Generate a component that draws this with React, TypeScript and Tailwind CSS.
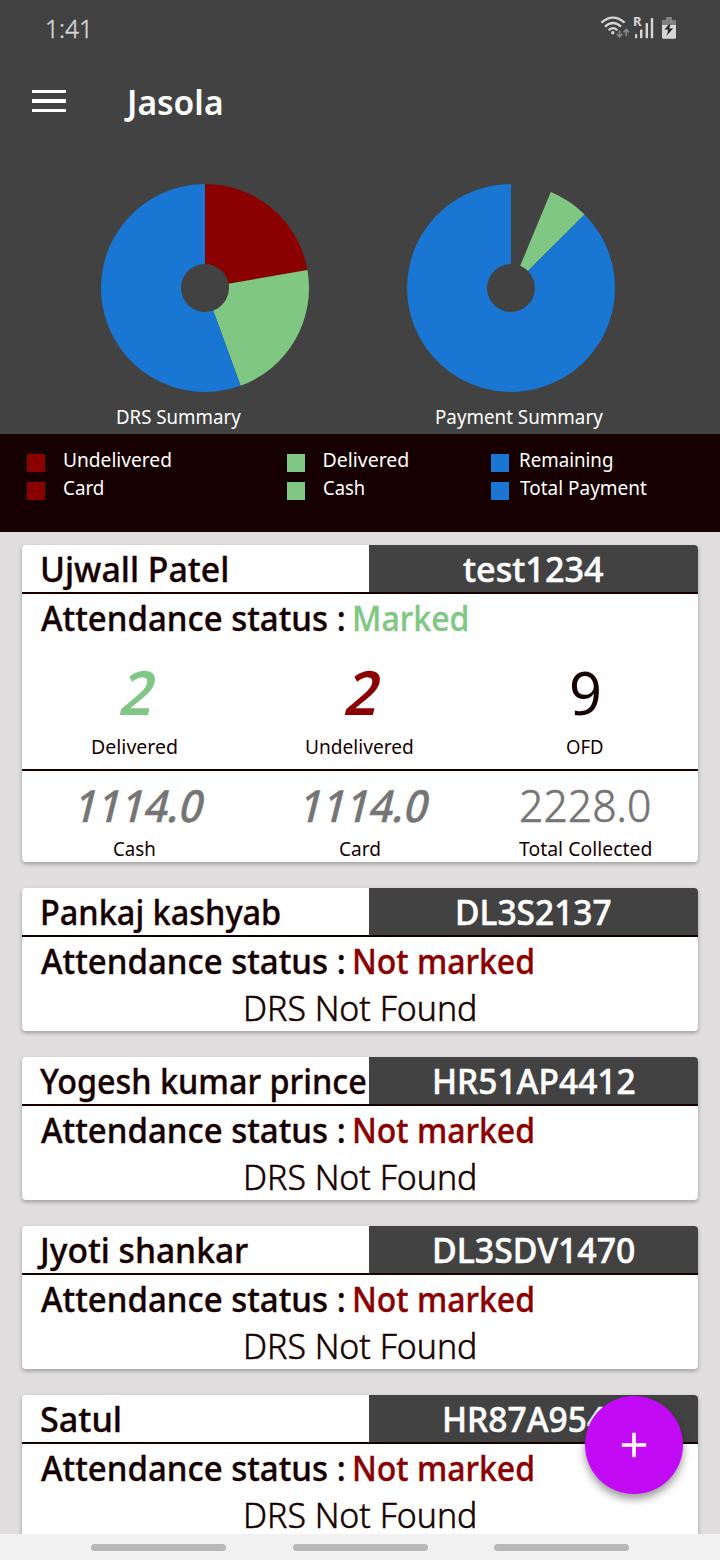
import { useLayoutEffect, useRef, useState } from "react";
import type { ReactNode } from "react";

/* Text condensed or widened horizontally so that it takes exactly `w` pixels. */
function Fit({ w, children }: { w: number; children: ReactNode }) {
  const ref = useRef<HTMLSpanElement>(null);
  const [scale, setScale] = useState(1);
  useLayoutEffect(() => {
    if (ref.current) setScale(w / ref.current.offsetWidth);
  }, [w]);
  return (
    <span className="inline-block shrink-0 whitespace-nowrap" style={{ width: w }}>
      <span ref={ref} className="inline-block origin-left" style={{ transform: `scaleX(${scale})` }}>
        {children}
      </span>
    </span>
  );
}

type Slice = { from: number; to: number; color: string };

function slicePath(from: number, to: number) {
  const pt = (deg: number, r: number) => {
    const a = (deg * Math.PI) / 180;
    return `${(104 + r * Math.sin(a)).toFixed(3)} ${(104 - r * Math.cos(a)).toFixed(3)}`;
  };
  const large = to - from > 180 ? 1 : 0;
  return `M${pt(from, 104)}A104 104 0 ${large} 1 ${pt(to, 104)}L${pt(to, 24)}A24 24 0 ${large} 0 ${pt(from, 24)}Z`;
}

function Donut({ slices }: { slices: Slice[] }) {
  return (
    <svg width="208" height="208" viewBox="0 0 208 208" className="block">
      {slices.map((s) => (
        <path key={s.from} d={slicePath(s.from, s.to)} fill={s.color} />
      ))}
    </svg>
  );
}

function StatusIcons() {
  return (
    <svg width="80" height="36" viewBox="600 10 80 36" className="block">
      <g fill="none" stroke="#d6d6d6" strokeWidth="2.2">
        <path d="M601.4 22.6Q613 12.6 624.6 22.6" />
        <path d="M605 26.6Q613 19.4 621 26.6" />
        <path d="M608.6 30.2Q613 26.2 617.4 30.2" />
      </g>
      <circle cx="612.8" cy="32.7" r="1.7" fill="#d6d6d6" />
      <g fill="none" stroke="#868686" strokeWidth="1.7">
        <path d="M619.6 30.5V37M616.9 34l2.7 2.9 2.7-2.9" />
        <path d="M626.3 36V29.6M623.6 32.4l2.7-2.9 2.7 2.9" />
      </g>
      <text x="633" y="26" fontSize="13" fontWeight="700" fill="#d6d6d6">R</text>
      <g fill="#d6d6d6">
        <rect x="635" y="34" width="2.2" height="4.2" rx=".8" />
        <rect x="640" y="29.4" width="2.4" height="8.8" rx=".8" />
        <rect x="645.6" y="23" width="2.4" height="15.2" rx=".8" />
        <rect x="650.8" y="18" width="2.4" height="20.2" rx=".8" />
      </g>
      <path d="M666 17h6v3h4v5h-14v-5h4z" fill="#808080" />
      <path d="M662 25h14v12.4q0 1.4-1.4 1.4h-11.2q-1.4 0-1.4-1.4z" fill="#d6d6d6" />
      <path d="M671.2 21.6l-7 8.2h3.8l-1.6 6.4 7-8h-3.9z" fill="#222" stroke="#d6d6d6" strokeWidth=".4" />
    </svg>
  );
}

function LegendItem({ color, label, w, gap }: { color: string; label: string; w: number; gap: string }) {
  return (
    <div className="flex h-7 items-center">
      <span className={`mt-[5px] size-[18px] ${color} ${gap}`} />
      <Fit w={w}>{label}</Fit>
    </div>
  );
}

type Person = { name: string; nameW: number; code: string; codeW: number; marked?: boolean };

const people: Person[] = [
  { name: "Ujwall Patel", nameW: 189.5, code: "test1234", codeW: 140.5, marked: true },
  { name: "Pankaj kashyab", nameW: 241, code: "DL3S2137", codeW: 157 },
  { name: "Yogesh kumar prince", nameW: 327, code: "HR51AP4412", codeW: 204 },
  { name: "Jyoti shankar", nameW: 208, code: "DL3SDV1470", codeW: 203 },
  { name: "Satul", nameW: 82, code: "HR87A9547", codeW: 183 },
];

function Stat({ value, valueW, label, labelW, size, style, h, lh }: {
  value: string; valueW: number; label: string; labelW: number; size: string; style: string; h: string; lh: string;
}) {
  return (
    <div className="flex flex-1 flex-col items-center">
      <div className={`${size} ${style} ${h}`}>
        <Fit w={valueW}>{value}</Fit>
      </div>
      <div className={`text-[20px] text-[#170000] ${lh}`}>
        <Fit w={labelW}>{label}</Fit>
      </div>
    </div>
  );
}

function Card({ p }: { p: Person }) {
  return (
    <section className="shrink-0 overflow-hidden rounded-[4px] bg-white text-[#170000] shadow-[0_2px_4px_rgba(0,0,0,0.3)]">
      <header className="flex h-[49px] border-b-2 border-[#170000] text-[35px] leading-[48px] font-medium">
        <div className="w-[347px] pl-[17.5px] [-webkit-text-stroke:0.35px_currentColor]">
          <Fit w={p.nameW}>{p.name}</Fit>
        </div>
        <div className="flex flex-1 justify-center bg-[#424242] font-medium text-white [-webkit-text-stroke:0.5px_currentColor]">
          <Fit w={p.codeW}>{p.code}</Fit>
        </div>
      </header>
      <div className="flex h-[47px] pl-[18.5px] text-[34.5px] leading-[48px] font-medium [-webkit-text-stroke:0.35px_currentColor]">
        <Fit w={305}>Attendance status :</Fit>
        {p.marked ? (
          <span className="ml-[6.5px] text-[#81c784]"><Fit w={117}>Marked</Fit></span>
        ) : (
          <span className="ml-[6.5px] text-[#8b0000]"><Fit w={183.5}>Not marked</Fit></span>
        )}
      </div>
      {p.marked ? (
        <>
          <div className="flex h-[130px] border-b-2 border-[#170000] pt-[9px]">
            <Stat value="2" valueW={33} label="Delivered" labelW={87} size="text-[61px]" style="translate-x-[5px] -skew-x-[14deg] font-semibold text-[#81c784]" h="leading-[84px] h-[83px]" lh="leading-[27px]" />
            <Stat value="2" valueW={33} label="Undelivered" labelW={109} size="text-[61px]" style="translate-x-[5px] -skew-x-[14deg] font-semibold text-[#8b0000]" h="leading-[84px] h-[83px]" lh="leading-[27px]" />
            <Stat value="9" valueW={33} label="OFD" labelW={38} size="text-[61px]" style="font-normal text-[#170000]" h="leading-[84px] h-[83px]" lh="leading-[27px]" />
          </div>
          <div className="flex h-[91px] pt-0.5">
            <Stat value="1114.0" valueW={129} label="Cash" labelW={43} size="text-[44px]" style="translate-x-[6px] -skew-x-[14deg] font-medium [-webkit-text-stroke:0.5px_currentColor] text-[#757575]" h="leading-[65px] h-[64px]" lh="leading-[23px]" />
            <Stat value="1114.0" valueW={129} label="Card" labelW={42} size="text-[44px]" style="translate-x-[6px] -skew-x-[14deg] font-medium [-webkit-text-stroke:0.5px_currentColor] text-[#757575]" h="leading-[65px] h-[64px]" lh="leading-[23px]" />
            <Stat value="2228.0" valueW={132} label="Total Collected" labelW={133} size="text-[44px]" style="font-light [-webkit-text-stroke:0.6px_currentColor] text-[#757575]" h="leading-[65px] h-[64px]" lh="leading-[23px]" />
          </div>
        </>
      ) : (
        <div className="flex h-[47px] justify-center text-[34px] leading-[49px] font-light [-webkit-text-stroke:0.5px_currentColor]">
          <Fit w={234}>DRS Not Found</Fit>
        </div>
      )}
    </section>
  );
}

export default function App() {
  return (
    <div className="relative flex h-[1560px] w-[720px] flex-col overflow-hidden bg-[#e0dedf] font-['Noto_Sans',sans-serif]">
      <div className="h-[434px] shrink-0 bg-[#424242] text-white">
        <div className="flex h-14 items-center justify-between pr-10 pl-[45px]">
          <span className="text-[25.5px] leading-[54px] font-light text-[#d6d6d6] [-webkit-text-stroke:0.4px_currentColor]"><Fit w={48}>1:41</Fit></span>
          <StatusIcons />
        </div>
        <div className="flex h-[92px] items-center pl-8">
          <div className="flex w-[34px] flex-col gap-1.5 pb-0.5">
            <span className="h-[3.5px] bg-white" />
            <span className="h-[3.5px] bg-white" />
            <span className="h-[3.5px] bg-white" />
          </div>
          <h1 className="ml-[61px] text-[35px] leading-[92px] font-semibold"><Fit w={97}>Jasola</Fit></h1>
        </div>
        <div className="flex pt-9 pl-[101px]">
          <div className="w-[306px]">
            <Donut slices={[
              { from: 0, to: 80, color: "#8b0000" },
              { from: 80, to: 160, color: "#81c784" },
              { from: 160, to: 360, color: "#1976d2" },
            ]} />
            <div className="mt-[11px] ml-[14.5px] text-[20px] leading-[27px]"><Fit w={125}>DRS Summary</Fit></div>
          </div>
          <div>
            <Donut slices={[
              { from: 22.5, to: 45, color: "#81c784" },
              { from: 45, to: 360, color: "#1976d2" },
            ]} />
            <div className="mt-[11px] ml-[28px] text-[20px] leading-[27px]"><Fit w={168}>Payment Summary</Fit></div>
          </div>
        </div>
      </div>
      <div className="flex h-[98px] shrink-0 bg-[#170000] pt-3 pl-[27px] text-[19.5px] leading-7 text-white">
        <div className="w-[260px]">
          <LegendItem color="bg-[#8b0000]" label="Undelivered" w={109} gap="mr-[17.5px]" />
          <LegendItem color="bg-[#8b0000]" label="Card" w={41.5} gap="mr-[17.5px]" />
        </div>
        <div className="w-[204px]">
          <LegendItem color="bg-[#81c784]" label="Delivered" w={87} gap="mr-[17.5px]" />
          <LegendItem color="bg-[#81c784]" label="Cash" w={42.5} gap="mr-[17.5px]" />
        </div>
        <div>
          <LegendItem color="bg-[#1976d2]" label="Remaining" w={94} gap="mr-[10px]" />
          <LegendItem color="bg-[#1976d2]" label="Total Payment" w={126.5} gap="mr-[10.5px]" />
        </div>
      </div>
      <main className="flex h-[1002px] shrink-0 flex-col gap-[26px] overflow-hidden px-[22px] pt-[13px]">
        {people.map((p) => <Card key={p.name} p={p} />)}
      </main>
      <nav className="flex h-[26px] shrink-0 items-center gap-[66.5px] bg-[#f1f1f1] pl-[91px]">
        <span className="h-[7px] w-[135px] rounded-full bg-[#b8b8b8]" />
        <span className="h-[7px] w-[135px] rounded-full bg-[#b8b8b8]" />
        <span className="h-[7px] w-[135px] rounded-full bg-[#b8b8b8]" />
      </nav>
      <button className="absolute right-[37px] bottom-[66px] flex size-[98px] items-center justify-center rounded-full bg-[#c20af5] shadow-[0_5px_9px_rgba(0,0,0,0.4)]" aria-label="Add">
        <svg width="26" height="26" viewBox="0 0 26 26" stroke="#fff" strokeWidth="3.6">
          <path d="M13 .8v24.4M.8 13h24.4" />
        </svg>
      </button>
    </div>
  );
}
